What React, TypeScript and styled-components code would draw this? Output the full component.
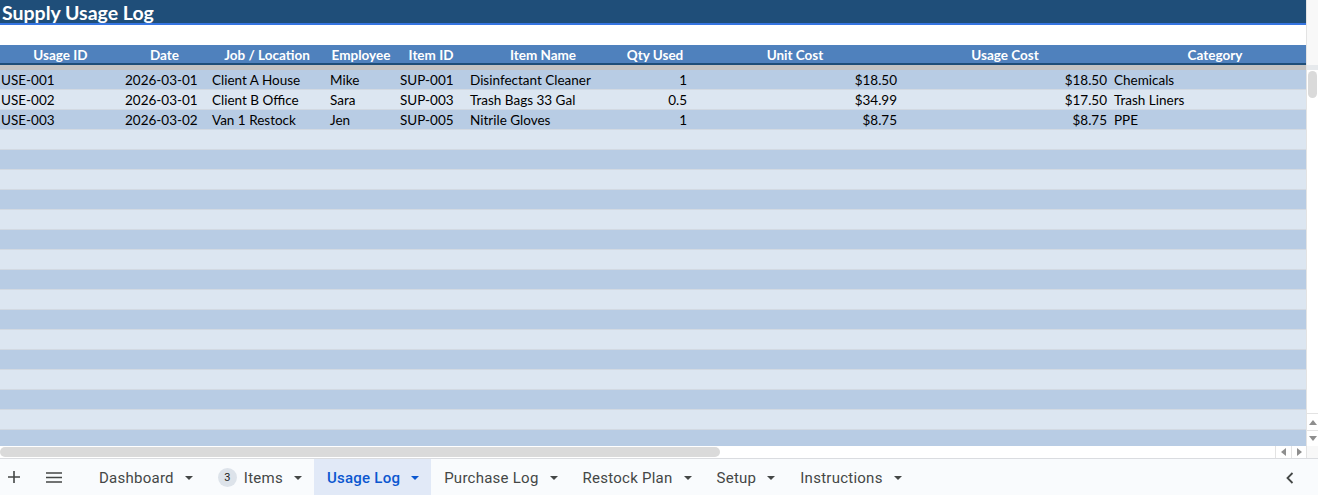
import styled, { createGlobalStyle } from "styled-components";

const GlobalStyle = createGlobalStyle`
  html, body {
    margin: 0;
    padding: 0;
    overflow: hidden;
    background: #ffffff;
  }
`;

const columns = [121, 87, 118, 70, 70, 154, 70, 210, 210, 210];
const template = columns.map((w) => `${w}px`).join(" ");

type Align = "left" | "right" | "center";

const headers = [
  "Usage ID",
  "Date",
  "Job / Location",
  "Employee",
  "Item ID",
  "Item Name",
  "Qty Used",
  "Unit Cost",
  "Usage Cost",
  "Category",
];

const aligns: Align[] = [
  "left",
  "right",
  "left",
  "left",
  "left",
  "left",
  "right",
  "right",
  "right",
  "left",
];

const rows: string[][] = [
  ["USE-001", "2026-03-01", "Client A House", "Mike", "SUP-001", "Disinfectant Cleaner", "1", "$18.50", "$18.50", "Chemicals"],
  ["USE-002", "2026-03-01", "Client B Office", "Sara", "SUP-003", "Trash Bags 33 Gal", "0.5", "$34.99", "$17.50", "Trash Liners"],
  ["USE-003", "2026-03-02", "Van 1 Restock", "Jen", "SUP-005", "Nitrile Gloves", "1", "$8.75", "$8.75", "PPE"],
];

const TOTAL_ROWS = 19;

const tabs = [
  { label: "Dashboard" },
  { label: "Items", badge: "3" },
  { label: "Usage Log", active: true },
  { label: "Purchase Log" },
  { label: "Restock Plan" },
  { label: "Setup" },
  { label: "Instructions" },
];

const Page = styled.div`
  width: 1318px;
  height: 495px;
  display: flex;
  flex-direction: column;
  overflow: hidden;
`;

const SheetArea = styled.div`
  display: flex;
  height: 446px;
`;

const Grid = styled.div`
  flex: 1;
  overflow: hidden;
  font-family: Lato, "Liberation Sans", sans-serif;
  font-size: 13.5px;
  color: #000000;
`;

const TitleRow = styled.div`
  height: 23px;
  background: #1f4e79;
  border-bottom: 2px solid #3574e0;
  width: 1320px;
  display: flex;
  align-items: center;
`;

const Title = styled.div`
  color: #ffffff;
  font-weight: 700;
  font-size: 19.5px;
  padding: 2px 0 0 2px;
  line-height: 23px;
`;

const BlankRow = styled.div`
  height: 20px;
  width: 1320px;
  background: #ffffff;
`;

const HeaderRow = styled.div`
  display: grid;
  grid-template-columns: ${template};
  height: 18px;
  background: #4f81bd;
  border-bottom: 2px solid #1f4e79;
`;

const HeaderCell = styled.div`
  color: #ffffff;
  font-weight: 700;
  text-align: center;
  line-height: 21px;
  white-space: nowrap;
  overflow: hidden;
`;

const FreezeBar = styled.div`
  height: 5px;
  width: 1320px;
  background: #c3c3c3;
`;

const DataRow = styled.div<{ $band: boolean }>`
  display: grid;
  grid-template-columns: ${template};
  height: 19px;
  background: ${(p) => (p.$band ? "#b8cce4" : "#dce6f1")};
  border-bottom: 1px solid #d2d9e2;
`;

const Cell = styled.div<{ $align: Align; $padRight?: number }>`
  text-align: ${(p) => p.$align};
  padding: 0 ${(p) => p.$padRight ?? 3}px 0 4px;
  line-height: 20px;
  white-space: nowrap;
  overflow: hidden;
`;

const FirstCell = styled(Cell)`
  padding-left: 1px;
`;

const VScroll = styled.div`
  width: 12px;
  display: flex;
  flex-direction: column;
  border-left: 1px solid #e3e3e3;
  box-sizing: border-box;
`;

const VFrozen = styled.div`
  height: 65px;
  background: #f8f8f8;
`;

const VSeparator = styled.div`
  height: 5px;
  background: #e6e9ec;
`;

const VTrack = styled.div`
  flex: 1;
  background: #ffffff;
  position: relative;
`;

const VThumb = styled.div`
  position: absolute;
  top: 1px;
  left: 1px;
  width: 9px;
  height: 27px;
  border-radius: 5px;
  background: #dadada;
`;

const ArrowButton = styled.div<{ $w?: number; $h?: number }>`
  width: ${(p) => (p.$w ? `${p.$w}px` : "auto")};
  height: ${(p) => (p.$h ? `${p.$h}px` : "auto")};
  display: flex;
  align-items: center;
  justify-content: center;
  background: #ffffff;
  flex-shrink: 0;
  box-sizing: border-box;
`;

const VArrowButton = styled(ArrowButton)`
  border-top: 1px solid #e3e3e3;
`;

const HScrollRow = styled.div`
  height: 12px;
  display: flex;
  border-bottom: 1px solid #dadce0;
`;

const HTrack = styled.div`
  flex: 1;
  padding-top: 1px;
`;

const HThumb = styled.div`
  width: 720px;
  height: 10px;
  border-radius: 5px;
  background: #dadada;
`;

const HArrowButton = styled(ArrowButton)`
  border-left: 1px solid #e3e3e3;
`;

const Corner = styled.div`
  width: 12px;
  border-left: 1px solid #e3e3e3;
  background: #f8f8f8;
  box-sizing: border-box;
`;

const TabBar = styled.div`
  flex: 1;
  display: flex;
  align-items: stretch;
  background: #f9fbfd;
  font-family: Roboto, "Liberation Sans", sans-serif;
  font-size: 15px;
  color: #444746;
`;

const IconButton = styled.div`
  width: 28px;
  display: flex;
  align-items: center;
  justify-content: center;
  color: #444746;
`;

const LeftTools = styled.div`
  display: flex;
  gap: 12px;
  margin-right: 18px;
`;

const Tab = styled.div<{ $active?: boolean }>`
  display: flex;
  align-items: center;
  padding: 1px 12px 0 13px;
  background: ${(p) => (p.$active ? "#e1e9f7" : "transparent")};
  color: ${(p) => (p.$active ? "#0b57d0" : "#444746")};
  font-weight: ${(p) => (p.$active ? 500 : 400)};
  letter-spacing: 0.25px;
  white-space: nowrap;
`;

const Badge = styled.span`
  width: 19px;
  height: 19px;
  border-radius: 50%;
  background: #dde3ea;
  color: #1f1f1f;
  font-size: 11px;
  display: flex;
  align-items: center;
  justify-content: center;
  margin-right: 7px;
  letter-spacing: 0;
`;

const Caret = styled.span`
  width: 0;
  height: 0;
  border-left: 4px solid transparent;
  border-right: 4px solid transparent;
  border-top: 4px solid currentColor;
  margin-left: 11px;
`;

const Spacer = styled.div`
  flex: 1;
`;

const CollapseButton = styled(IconButton)`
  width: 40px;
  margin-right: 8px;
  padding-top: 1px;
`;

const Triangle = ({ dir }: { dir: "up" | "down" | "left" | "right" }) => {
  const paths = {
    up: "M0 5 L4 0 L8 5 Z",
    down: "M0 0 L4 5 L8 0 Z",
    left: "M5 0 L0 4 L5 8 Z",
    right: "M0 0 L5 4 L0 8 Z",
  };
  const vertical = dir === "up" || dir === "down";
  return (
    <svg
      width={vertical ? 8 : 5}
      height={vertical ? 5 : 8}
      viewBox={vertical ? "0 0 8 5" : "0 0 5 8"}
    >
      <path d={paths[dir]} fill="#8e8e8e" />
    </svg>
  );
};

const App = () => {
  return (
    <>
      <GlobalStyle />
      <Page>
        <SheetArea>
          <Grid>
            <TitleRow>
              <Title>Supply Usage Log</Title>
            </TitleRow>
            <BlankRow />
            <HeaderRow>
              {headers.map((h) => (
                <HeaderCell key={h}>{h}</HeaderCell>
              ))}
            </HeaderRow>
            <FreezeBar />
            {Array.from({ length: TOTAL_ROWS }).map((_, i) => {
              const data = rows[i];
              return (
                <DataRow key={i} $band={i % 2 === 0}>
                  {data &&
                    data.map((value, c) =>
                      c === 0 ? (
                        <FirstCell key={c} $align={aligns[c]}>
                          {value}
                        </FirstCell>
                      ) : (
                        <Cell
                          key={c}
                          $align={aligns[c]}
                          $padRight={c === 1 ? 12 : 3}
                        >
                          {value}
                        </Cell>
                      )
                    )}
                </DataRow>
              );
            })}
          </Grid>
          <VScroll>
            <VFrozen />
            <VSeparator />
            <VTrack>
              <VThumb />
            </VTrack>
            <VArrowButton $h={17}>
              <Triangle dir="up" />
            </VArrowButton>
            <VArrowButton $h={16}>
              <Triangle dir="down" />
            </VArrowButton>
          </VScroll>
        </SheetArea>
        <HScrollRow>
          <HTrack>
            <HThumb />
          </HTrack>
          <HArrowButton $w={16}>
            <Triangle dir="left" />
          </HArrowButton>
          <HArrowButton $w={15}>
            <Triangle dir="right" />
          </HArrowButton>
          <Corner />
        </HScrollRow>
        <TabBar>
          <LeftTools>
            <IconButton>
              <svg width="12" height="12" viewBox="0 0 12 12">
                <path d="M6 0 V12 M0 6 H12" stroke="#444746" strokeWidth="1.6" />
              </svg>
            </IconButton>
            <IconButton>
              <svg width="16" height="11" viewBox="0 0 16 11">
                <path
                  d="M0 1 H16 M0 5.5 H16 M0 10 H16"
                  stroke="#444746"
                  strokeWidth="1.6"
                />
              </svg>
            </IconButton>
          </LeftTools>
          {tabs.map((t) => (
            <Tab key={t.label} $active={t.active}>
              {t.badge && <Badge>{t.badge}</Badge>}
              {t.label}
              <Caret />
            </Tab>
          ))}
          <Spacer />
          <CollapseButton>
            <svg width="8" height="12" viewBox="0 0 8 12">
              <path
                d="M6.5 1 L1.5 6 L6.5 11"
                stroke="#444746"
                strokeWidth="1.8"
                fill="none"
              />
            </svg>
          </CollapseButton>
        </TabBar>
      </Page>
    </>
  );
};

export default App;
